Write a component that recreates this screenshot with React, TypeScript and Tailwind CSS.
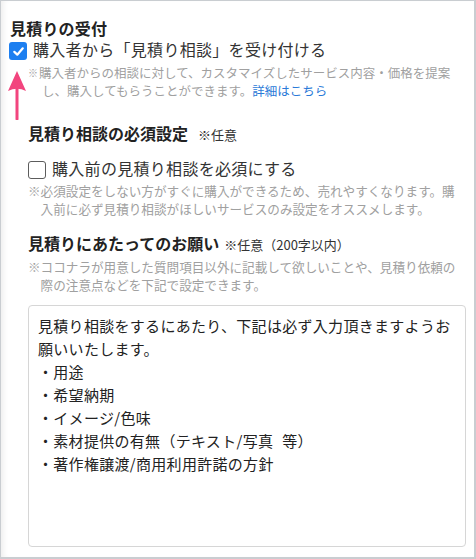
import React from 'react';

const font = { fontFamily: '"Noto Sans CJK JP", "Noto Sans", sans-serif' };

const CheckedBox = () => (
  <div className="w-[18px] h-[18px] rounded-[3px] bg-[#1d7ff0] flex items-center justify-center shrink-0">
    <svg width="13" height="13" viewBox="0 0 14 14" fill="none">
      <path d="M2.5 7.4 L5.7 10.4 L11.6 3.6" stroke="white" strokeWidth="2.4" strokeLinecap="round" strokeLinejoin="round" />
    </svg>
  </div>
);

const EmptyBox = () => (
  <div className="w-[18px] h-[18px] rounded-[3px] border-[1.5px] border-[#5c5c5c] bg-white shrink-0" />
);

const App = () => {
  return (
    <div
      className="relative w-[476px] h-[559px] bg-white border-t border-l border-r-2 border-b-2 border-[#c9cdd1] shadow-[inset_6px_0_6px_-4px_rgba(0,0,0,0.08)] pl-[9px] pr-[8px] pt-[16px] text-[#333]"
      style={font}
    >
      {/* 見積りの受付 */}
      <h2 className="text-[16px] leading-[22px] font-bold text-[#222] tracking-[0.2px]">見積りの受付</h2>
      <div className="flex items-start gap-[6px] -ml-px -mt-px">
        <div className="mt-[4px]">
          <CheckedBox />
        </div>
        <span className="text-[16px] leading-[22px] tracking-[0.3px]">購入者から「見積り相談」を受け付ける</span>
      </div>
      <div className="mt-[4px] pl-[18px] flex text-[12.5px] leading-[18px] text-[#a0a0a0] whitespace-nowrap">
        <span className="w-[11px] text-[10px] shrink-0">※</span>
        <div>
          <span className="block">購入者からの相談に対して、カスタマイズしたサービス内容・価格を提案</span>
          <span className="block pl-[3px]">
            し、購入してもらうことができます。<span className="text-[#2a7ad8]">詳細はこちら</span>
          </span>
        </div>
      </div>

      {/* 見積り相談の必須設定 */}
      <div className="pl-[18px]">
        <div className="mt-[22px] flex items-baseline gap-[10px]">
          <h3 className="text-[16px] leading-[22px] font-bold text-[#222]">見積り相談の必須設定</h3>
          <span className="text-[13px] text-[#333]">※任意</span>
        </div>
        <div className="mt-[12px] flex items-start gap-[6px]">
          <div className="mt-[4px]">
            <EmptyBox />
          </div>
          <span className="text-[16px] leading-[22px] tracking-[0.3px]">購入前の見積り相談を必須にする</span>
        </div>
        <p className="mt-[3px] text-[12.6px] leading-[18px] text-[#a0a0a0] whitespace-nowrap pl-[1em] -indent-[1em]">
          ※必須設定をしない方がすぐに購入ができるため、売れやすくなります。購
          <br />
          入前に必ず見積り相談がほしいサービスのみ設定をオススメします。
        </p>

        {/* 見積りにあたってのお願い */}
        <div className="mt-[14px] flex items-baseline gap-[5px]">
          <h3 className="text-[16px] leading-[22px] font-bold text-[#222]">見積りにあたってのお願い</h3>
          <span className="text-[13px] text-[#333]">※任意（200字以内）</span>
        </div>
        <p className="mt-[4px] text-[12.6px] leading-[18px] text-[#a0a0a0] whitespace-nowrap pl-[1em] -indent-[1em]">
          ※ココナラが用意した質問項目以外に記載して欲しいことや、見積り依頼の
          <br />
          際の注意点などを下記で設定できます。
        </p>
        <div className="mt-[11px] h-[242px] rounded-[4px] border border-[#d6d6d6] pl-[9px] pt-[8px] text-[15px] leading-[23px] tracking-[0.3px] text-[#222] whitespace-nowrap">
          <div>見積り相談をするにあたり、下記は必ず入力頂きますようお</div>
          <div>願いいたします。</div>
          <div>・用途</div>
          <div>・希望納期</div>
          <div>・イメージ/色味</div>
          <div>
            ・素材提供の有無（テキスト/写真<span className="inline-block w-[9px]" />等）
          </div>
          <div>・著作権譲渡/商用利用許諾の方針</div>
        </div>
      </div>

      {/* 注目の矢印 */}
      <svg className="absolute left-[6px] top-[69px]" width="20" height="50" viewBox="0 0 20 50" fill="none">
        <path d="M10 18 L10 49" stroke="#f2457e" strokeWidth="3" strokeLinecap="round" />
        <path d="M10 1 L19 21 Q10 16.5 1 21 Z" fill="#f2457e" />
      </svg>
    </div>
  );
};

export default App;
